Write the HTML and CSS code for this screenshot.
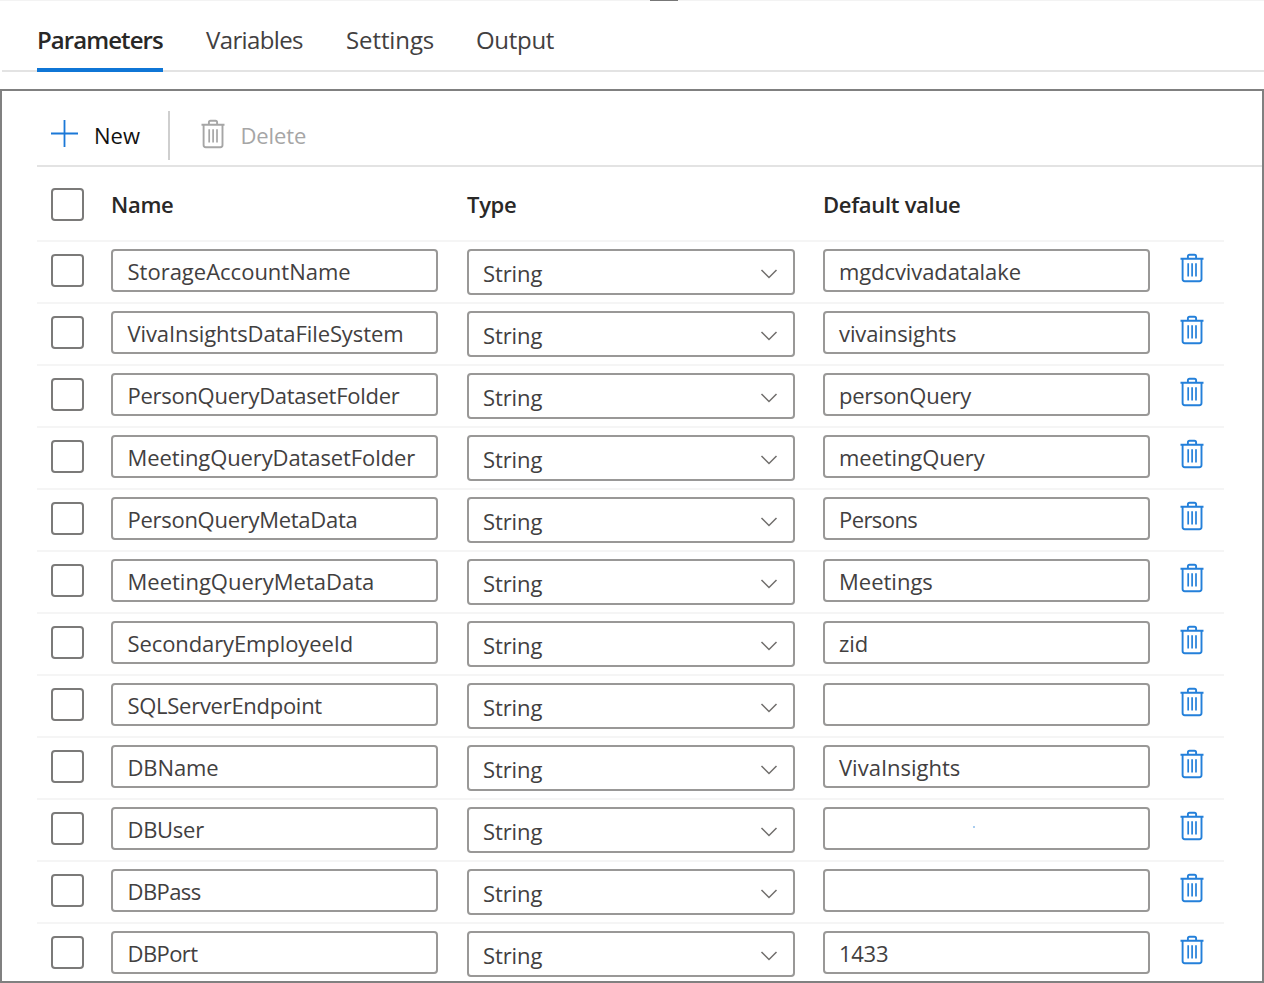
FILE: index.html
```html
<!DOCTYPE html>
<html lang="en">
<head>
<meta charset="utf-8">
<title>Parameters</title>
<link rel="stylesheet" href="styles.css">
</head>
<body>
<svg class="sprite" aria-hidden="true">
  <symbol id="trash" viewBox="0 0 24 30">
    <path d="M.5 5.8H23.5M7.9 5V3.3Q7.9 1.7 9.5 1.7H14.5Q16.1 1.7 16.1 3.3V5M2.6 6V26Q2.6 28.2 4.800 28.2H19.300Q21.500 28.2 21.500 26V6" fill="none" stroke="currentColor" stroke-width="1.900"/>
    <path d="M8.200 10.300V23.400M12.100 10.300V23.400M16 10.300V23.400" fill="none" stroke="currentColor" stroke-width="1.700"/>
  </symbol>
  <symbol id="chevron" viewBox="0 0 18 12">
    <path d="M1.500 2 9 9.500 16.500 2" fill="none" stroke="currentColor" stroke-width="1.500"/>
  </symbol>
</svg>
<div class="grip"></div>
<nav class="tabs">
  <a class="tab tab-active">Parameters</a>
  <a class="tab tab-variables">Variables</a>
  <a class="tab tab-settings">Settings</a>
  <a class="tab tab-output">Output</a>
</nav>
<main class="panel">
  <div class="toolbar">
    <svg class="plus" viewBox="0 0 27 27"><path d="M0 13.500H27M13.500 0V27" stroke="currentColor" stroke-width="1.800"/></svg>
    <span class="new">New</span>
    <span class="separator"></span>
    <svg class="trash trash-disabled"><use href="#trash"/></svg>
    <span class="delete">Delete</span>
  </div>
  <div class="grid head"><span class="check"></span><span>Name</span><span>Type</span><span class="wide-head">Default value</span></div>
  <div class="grid row"><span class="check"></span><span class="field">StorageAccountName</span><span class="field select">String<svg class="chevron"><use href="#chevron"/></svg></span><span class="field snug">mgdcvivadatalake</span><svg class="trash"><use href="#trash"/></svg></div>
  <div class="grid row"><span class="check"></span><span class="field snug">VivaInsightsDataFileSystem</span><span class="field select">String<svg class="chevron"><use href="#chevron"/></svg></span><span class="field snug">vivainsights</span><svg class="trash"><use href="#trash"/></svg></div>
  <div class="grid row"><span class="check"></span><span class="field tight">PersonQueryDatasetFolder</span><span class="field select">String<svg class="chevron"><use href="#chevron"/></svg></span><span class="field tight">personQuery</span><svg class="trash"><use href="#trash"/></svg></div>
  <div class="grid row"><span class="check"></span><span class="field snug">MeetingQueryDatasetFolder</span><span class="field select">String<svg class="chevron"><use href="#chevron"/></svg></span><span class="field snug">meetingQuery</span><svg class="trash"><use href="#trash"/></svg></div>
  <div class="grid row"><span class="check"></span><span class="field tight">PersonQueryMetaData</span><span class="field select">String<svg class="chevron"><use href="#chevron"/></svg></span><span class="field tighter">Persons</span><svg class="trash"><use href="#trash"/></svg></div>
  <div class="grid row"><span class="check"></span><span class="field">MeetingQueryMetaData</span><span class="field select">String<svg class="chevron"><use href="#chevron"/></svg></span><span class="field">Meetings</span><svg class="trash"><use href="#trash"/></svg></div>
  <div class="grid row"><span class="check"></span><span class="field snug">SecondaryEmployeeId</span><span class="field select">String<svg class="chevron"><use href="#chevron"/></svg></span><span class="field">zid</span><svg class="trash"><use href="#trash"/></svg></div>
  <div class="grid row"><span class="check"></span><span class="field tight">SQLServerEndpoint</span><span class="field select">String<svg class="chevron"><use href="#chevron"/></svg></span><span class="field"></span><svg class="trash"><use href="#trash"/></svg></div>
  <div class="grid row"><span class="check"></span><span class="field snug">DBName</span><span class="field select">String<svg class="chevron"><use href="#chevron"/></svg></span><span class="field">VivaInsights</span><svg class="trash"><use href="#trash"/></svg></div>
  <div class="grid row"><span class="check"></span><span class="field tight">DBUser</span><span class="field select">String<svg class="chevron"><use href="#chevron"/></svg></span><span class="field"><i class="speck"></i></span><svg class="trash"><use href="#trash"/></svg></div>
  <div class="grid row"><span class="check"></span><span class="field tighter">DBPass</span><span class="field select">String<svg class="chevron"><use href="#chevron"/></svg></span><span class="field"></span><svg class="trash"><use href="#trash"/></svg></div>
  <div class="grid row"><span class="check"></span><span class="field tighter">DBPort</span><span class="field select">String<svg class="chevron"><use href="#chevron"/></svg></span><span class="field tight">1433</span><svg class="trash"><use href="#trash"/></svg></div>
</main>
</body>
</html>
```
FILE: styles.css
```css
* { box-sizing: border-box; }
body {
  margin: 0;
  height: 983px;
  overflow: hidden;
  display: flex;
  flex-direction: column;
  background: #fff;
  color: #42403f;
  font: 22px/30px "Open Sans", "Noto Sans", sans-serif;
}
svg { display: block; }
.sprite { position: absolute; width: 0; height: 0; }

.grip { height: 1px; flex: none; background: linear-gradient(#777, #777) 650px 0 / 28px 1px no-repeat #f3f3f3; }
.tabs {
  flex: none;
  display: flex;
  height: 71px;
  margin: 0 0 17px 2px;
  padding-left: 35px;
  border-bottom: 2px solid #e3e3e3;
  font-size: 24px;
}
.tab { height: 71px; padding-top: 24px; white-space: nowrap; }
.tab-active { width: 126px; margin-right: 43px; border-bottom: 4px solid #0f76d6; color: #292827; font-weight: 600; letter-spacing: -.93px; }
.tab-variables { width: 140px; letter-spacing: -.62px; }
.tab-settings { width: 130px; letter-spacing: -.1px; }
.tab-output { letter-spacing: -.3px; }

.panel { flex: 1; min-height: 0; overflow: hidden; border: 2px solid #808080; padding-left: 35px; }
.toolbar { display: flex; height: 76px; padding: 19px 0 0 14px; border-bottom: 2px solid #e3e3e3; }
.plus { width: 27px; height: 27px; margin: 10px 16px 0 0; color: #1b78d7; }
.new { width: 74px; margin-top: 10px; color: #111; }
.separator { width: 2px; height: 49px; margin-top: 1px; background: #cfcfcf; }
.trash { width: 24px; height: 30px; margin-top: 11px; margin-left: -1px; color: #2480da; }
.trash-disabled { margin: 9px 16px 0 30.5px; color: #a6a6a6; }
.delete { margin-top: 10px; color: #a6a6a6; letter-spacing: -.1px; }

.grid { display: grid; grid-template-columns: 60px 356px 356px 358px 1fr; align-items: start; width: 1187px; padding-left: 14px; }
.head { height: 73px; padding-top: 22px; color: #292827; font-weight: 600; letter-spacing: -.3px; }
.head .check { margin-top: -1px; }
.row { height: 62px; border-top: 2px solid #f5f5f5; }
.check { width: 33px; height: 33px; border: 2px solid #7b7a79; border-radius: 4px; }
.row .check { margin-top: 12px; }
.field {
  display: flex;
  width: 327px;
  height: 43px;
  margin-top: 7px;
  padding: 5px 14px 0;
  border: 2px solid #999897;
  border-radius: 4px;
}
.field:nth-child(2) { padding-left: 14.5px; }
.select { width: 328px; height: 46px; padding: 7px 15px 0 14px; justify-content: space-between; letter-spacing: -.1px; }
.chevron { width: 18px; height: 12px; margin: 10px 0 0; color: #706e6c; }
.snug { letter-spacing: -.1px; }
.tight { letter-spacing: -.28px; }
.tighter { letter-spacing: -.58px; }
.speck { width: 2px; height: 2px; margin: 12px 0 0 134px; background: #a9cdef; }
```
